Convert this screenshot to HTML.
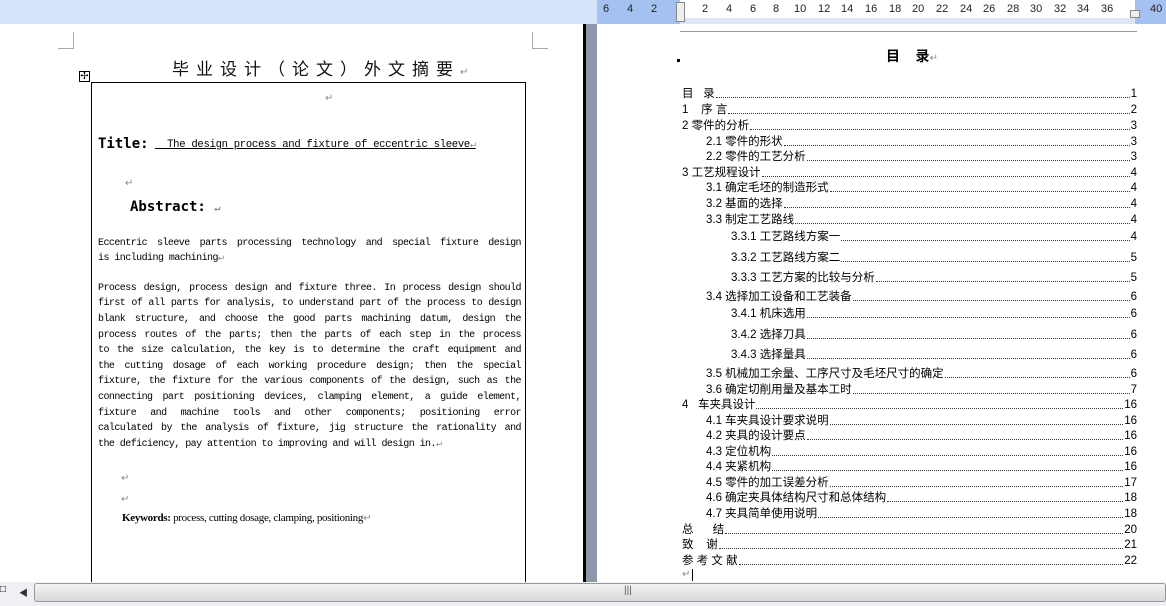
<!DOCTYPE html>
<html><head><meta charset="utf-8"><style>
*{margin:0;padding:0;box-sizing:border-box}
body{width:1166px;height:606px;overflow:hidden;background:#fff;position:relative;font-family:"Liberation Sans","Noto Sans CJK SC",sans-serif;color:#000}
.a{position:absolute;white-space:nowrap}
.top{left:0;top:0;width:1166px;height:24px;background:#d6e4f9}
.div1{left:583px;top:24px;width:3px;height:558px;background:#000}
.div2{left:586px;top:24px;width:11px;height:558px;background:#8e97a9}
.rul{top:0;height:24px}
.num{top:3px;font-size:11px;color:#222}
.pm{color:#888;font-size:10px}
.ser{font-family:"Liberation Serif","Noto Serif CJK SC",serif}
.ab{left:98px;width:423px;font-size:10px;font-family:"Liberation Mono","Noto Sans CJK SC",monospace;text-align:justify;text-align-last:justify;letter-spacing:-0.55px;white-space:nowrap;line-height:14px;overflow:hidden}
.toc{left:682px;width:455px;font-size:11.5px;height:14px;line-height:14px;display:flex;align-items:flex-end}
.toc .t{white-space:nowrap;background:#fff;padding-right:1px}
.toc .d{flex:1;border-bottom:1px dotted #333;margin-bottom:3px;height:1px}
.toc .n{padding-left:1px}
</style></head><body>
<div class="a top"></div>
<div class="a rul" style="left:597px;width:83px;background:#a5c1f1"></div>
<div class="a rul" style="left:680px;width:455px;background:#fff;height:18px"></div>
<div class="a" style="left:680px;top:18px;width:455px;height:6px;background:#dbe6f7"></div>
<div class="a rul" style="left:1135px;width:31px;background:#a5c1f1"></div>
<div class="a num" style="left:603px">6</div><div class="a num" style="left:627px">4</div><div class="a num" style="left:651px">2</div>
<div class="a num" style="left:702px">2</div><div class="a num" style="left:726px">4</div><div class="a num" style="left:750px">6</div><div class="a num" style="left:773px">8</div>
<div class="a num" style="left:794px">10</div><div class="a num" style="left:818px">12</div><div class="a num" style="left:841px">14</div><div class="a num" style="left:865px">16</div><div class="a num" style="left:889px">18</div><div class="a num" style="left:912px">20</div><div class="a num" style="left:936px">22</div><div class="a num" style="left:960px">24</div><div class="a num" style="left:983px">26</div><div class="a num" style="left:1007px">28</div><div class="a num" style="left:1030px">30</div><div class="a num" style="left:1054px">32</div><div class="a num" style="left:1077px">34</div><div class="a num" style="left:1101px">36</div><div class="a num" style="left:1150px">40</div>
<div class="a" style="left:676px;top:2px;width:9px;height:20px;border:1px solid #888;background:#eee"></div>
<div class="a" style="left:1130px;top:10px;width:10px;height:8px;border:1px solid #888;background:#eee"></div>
<div class="a" style="left:680px;top:31px;width:457px;height:1px;background:#999"></div>
<div class="a div1"></div><div class="a div2"></div>
<div class="a" style="left:73px;top:32px;width:1px;height:16px;background:#aaa"></div>
<div class="a" style="left:58px;top:48px;width:16px;height:1px;background:#aaa"></div>
<div class="a" style="left:532px;top:32px;width:1px;height:16px;background:#aaa"></div>
<div class="a" style="left:532px;top:48px;width:16px;height:1px;background:#aaa"></div>
<div class="a" style="left:172px;top:55px;font-size:17px;letter-spacing:7px;color:#111">毕业设计（论文）外文摘要<span class="pm" style="letter-spacing:0">↵</span></div>
<div class="a" style="left:79px;top:71px;width:11px;height:11px;border:1px solid #000;font-size:10px;line-height:9px;text-align:center">✢</div>
<div class="a" style="left:91px;top:82px;width:435px;height:510px;border:1.5px solid #000;border-bottom:none"></div>
<div class="a pm" style="left:325px;top:93px">↵</div>
<div class="a" style="left:98px;top:136px;font-size:14px;font-weight:bold;font-family:'DejaVu Sans Mono',monospace">Title:</div>
<div class="a" style="left:155px;top:139px;font-size:10.6px;font-family:'Liberation Mono',monospace;letter-spacing:-0.3px;text-decoration:underline">&nbsp;&nbsp;The design process and fixture of eccentric sleeve<span class="pm" style="text-decoration:none">↵</span></div>
<div class="a pm" style="left:125px;top:178px">↵</div>
<div class="a" style="left:130px;top:199px;font-size:14px;font-weight:bold;font-family:'DejaVu Sans Mono',monospace">Abstract: <span class="pm">↵</span></div>
<div class="a ab" style="top:237px">Eccentric sleeve parts processing technology and special fixture design</div>
<div class="a ab" style="top:252px;text-align-last:left">is including machining<span class="pm">↵</span></div>
<div class="a ab" style="top:282px">Process design, process design and fixture three. In process design should</div>
<div class="a ab" style="top:297px">first of all parts for analysis, to understand part of the process to design</div>
<div class="a ab" style="top:313px">blank structure, and choose the good parts machining datum, design the</div>
<div class="a ab" style="top:329px">process routes of the parts; then the parts of each step in the process</div>
<div class="a ab" style="top:344px">to the size calculation, the key is to determine the craft equipment and</div>
<div class="a ab" style="top:360px">the cutting dosage of each working procedure design; then the special</div>
<div class="a ab" style="top:375px">fixture, the fixture for the various components of the design, such as the</div>
<div class="a ab" style="top:391px">connecting part positioning devices, clamping element, a guide element,</div>
<div class="a ab" style="top:407px">fixture and machine tools and other components; positioning error</div>
<div class="a ab" style="top:422px">calculated by the analysis of fixture, jig structure the rationality and</div>
<div class="a ab" style="top:438px;text-align-last:left">the deficiency, pay attention to improving and will design in.<span class="pm">↵</span></div>
<div class="a pm" style="left:121px;top:473px">↵</div>
<div class="a pm" style="left:121px;top:494px">↵</div>
<div class="a ser" style="left:122px;top:512px;font-size:11px;letter-spacing:-0.3px"><b>Keywords:</b> process, cutting dosage, clamping, positioning<span class="pm">↵</span></div>
<div class="a" style="left:677px;top:59px;width:3px;height:3px;background:#000"></div>
<div class="a" style="left:886px;top:46px;font-size:14px;font-weight:bold">目&nbsp;&nbsp;&nbsp;&nbsp;录<span class="pm" style="font-weight:normal">↵</span></div>
<div class="a toc" style="top:87px"><span class="t">目&nbsp;&nbsp;&nbsp;录</span><span class="d"></span><span class="n">1</span></div>
<div class="a toc" style="top:103px"><span class="t">1&nbsp;&nbsp;&nbsp;&nbsp;序&nbsp;言</span><span class="d"></span><span class="n">2</span></div>
<div class="a toc" style="top:119px"><span class="t">2 零件的分析</span><span class="d"></span><span class="n">3</span></div>
<div class="a toc" style="top:135px;padding-left:24px"><span class="t">2.1 零件的形状</span><span class="d"></span><span class="n">3</span></div>
<div class="a toc" style="top:150px;padding-left:24px"><span class="t">2.2 零件的工艺分析</span><span class="d"></span><span class="n">3</span></div>
<div class="a toc" style="top:166px"><span class="t">3 工艺规程设计</span><span class="d"></span><span class="n">4</span></div>
<div class="a toc" style="top:181px;padding-left:24px"><span class="t">3.1 确定毛坯的制造形式</span><span class="d"></span><span class="n">4</span></div>
<div class="a toc" style="top:197px;padding-left:24px"><span class="t">3.2 基面的选择</span><span class="d"></span><span class="n">4</span></div>
<div class="a toc" style="top:213px;padding-left:24px"><span class="t">3.3 制定工艺路线</span><span class="d"></span><span class="n">4</span></div>
<div class="a toc" style="top:230px;padding-left:49px"><span class="t">3.3.1 工艺路线方案一</span><span class="d"></span><span class="n">4</span></div>
<div class="a toc" style="top:251px;padding-left:49px"><span class="t">3.3.2 工艺路线方案二</span><span class="d"></span><span class="n">5</span></div>
<div class="a toc" style="top:271px;padding-left:49px"><span class="t">3.3.3 工艺方案的比较与分析</span><span class="d"></span><span class="n">5</span></div>
<div class="a toc" style="top:290px;padding-left:24px"><span class="t">3.4 选择加工设备和工艺装备</span><span class="d"></span><span class="n">6</span></div>
<div class="a toc" style="top:307px;padding-left:49px"><span class="t">3.4.1 机床选用</span><span class="d"></span><span class="n">6</span></div>
<div class="a toc" style="top:328px;padding-left:49px"><span class="t">3.4.2 选择刀具</span><span class="d"></span><span class="n">6</span></div>
<div class="a toc" style="top:348px;padding-left:49px"><span class="t">3.4.3 选择量具</span><span class="d"></span><span class="n">6</span></div>
<div class="a toc" style="top:367px;padding-left:24px"><span class="t">3.5 机械加工余量、工序尺寸及毛坯尺寸的确定</span><span class="d"></span><span class="n">6</span></div>
<div class="a toc" style="top:383px;padding-left:24px"><span class="t">3.6 确定切削用量及基本工时</span><span class="d"></span><span class="n">7</span></div>
<div class="a toc" style="top:398px"><span class="t">4&nbsp;&nbsp;&nbsp;车夹具设计</span><span class="d"></span><span class="n">16</span></div>
<div class="a toc" style="top:414px;padding-left:24px"><span class="t">4.1 车夹具设计要求说明</span><span class="d"></span><span class="n">16</span></div>
<div class="a toc" style="top:429px;padding-left:24px"><span class="t">4.2 夹具的设计要点</span><span class="d"></span><span class="n">16</span></div>
<div class="a toc" style="top:445px;padding-left:24px"><span class="t">4.3 定位机构</span><span class="d"></span><span class="n">16</span></div>
<div class="a toc" style="top:460px;padding-left:24px"><span class="t">4.4 夹紧机构</span><span class="d"></span><span class="n">16</span></div>
<div class="a toc" style="top:476px;padding-left:24px"><span class="t">4.5 零件的加工误差分析</span><span class="d"></span><span class="n">17</span></div>
<div class="a toc" style="top:491px;padding-left:24px"><span class="t">4.6 确定夹具体结构尺寸和总体结构</span><span class="d"></span><span class="n">18</span></div>
<div class="a toc" style="top:507px;padding-left:24px"><span class="t">4.7 夹具简单使用说明</span><span class="d"></span><span class="n">18</span></div>
<div class="a toc" style="top:523px"><span class="t">总&nbsp;&nbsp;&nbsp;&nbsp;&nbsp;&nbsp;结</span><span class="d"></span><span class="n">20</span></div>
<div class="a toc" style="top:538px"><span class="t">致&nbsp;&nbsp;&nbsp;&nbsp;谢</span><span class="d"></span><span class="n">21</span></div>
<div class="a toc" style="top:554px"><span class="t">参&nbsp;考&nbsp;文&nbsp;献</span><span class="d"></span><span class="n">22</span></div>
<div class="a pm" style="left:682px;top:569px">↵</div>
<div class="a" style="left:692px;top:569px;width:1px;height:12px;background:#000"></div>
<div class="a" style="left:0;top:582px;width:1166px;height:24px;background:#eef0f3"></div>
<div class="a" style="left:0;top:584px;font-size:10px">&#9633;</div>
<div class="a" style="left:19px;top:586px;font-size:9px;color:#333">◀</div>
<div class="a" style="left:34px;top:583px;width:1132px;height:19px;border:1px solid #999;border-radius:3px;background:linear-gradient(#f4f4f4,#d8d8d8)"></div>
<div class="a" style="left:624px;top:585px;font-size:10px;color:#555">|||</div>
</body></html>
